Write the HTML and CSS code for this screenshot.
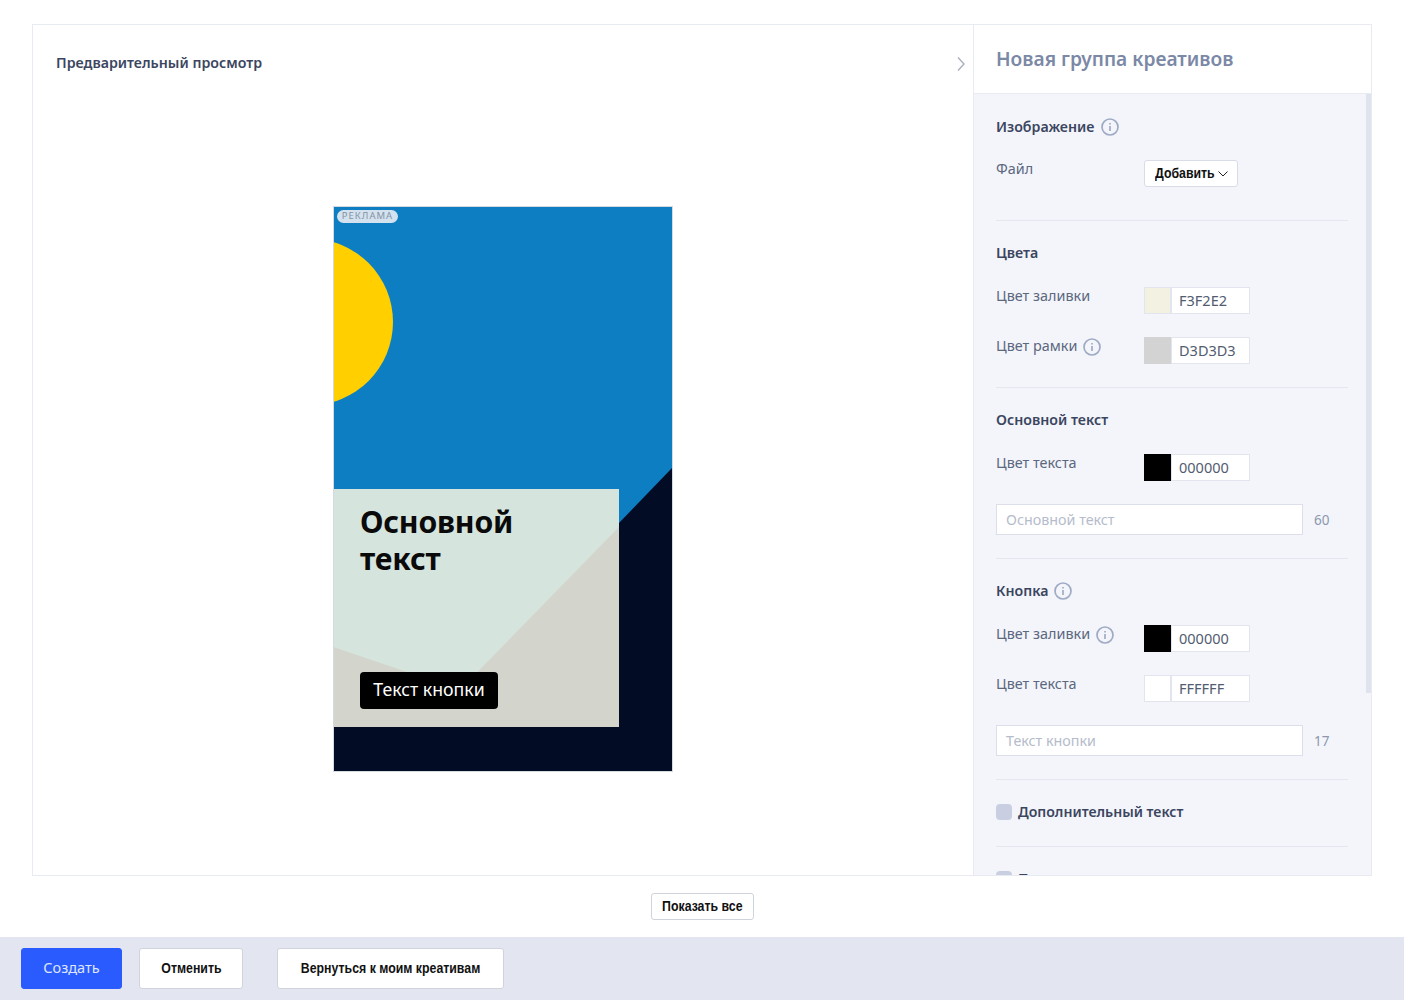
FILE: index.html
```html
<!DOCTYPE html>
<html lang="ru">
<head>
<meta charset="utf-8">
<title>Новая группа креативов</title>
<link rel="stylesheet" href="styles.css">
</head>
<body>
<div class="page">
  <div class="frame">
    <section class="preview">
      <div class="preview-head">
        <h2 class="preview-title">Предварительный просмотр</h2>
        <svg class="chevron-right" viewBox="0 0 10 16" width="10" height="16"><path d="M2 1.500 8 8l-6 6.500" fill="none" stroke="#a9afbd" stroke-width="1.400"/></svg>
      </div>
      <div class="preview-stage">
        <div class="ad">
          <svg class="ad-art" viewBox="0 0 338 564" width="338" height="564">
            <rect width="338" height="564" fill="#0e7ec2"/>
            <circle cx="-24.300" cy="115" r="83.300" fill="#ffcf00"/>
            <polygon points="338,261 338,564 0,564 0,520 285,520 285,316" fill="#020d25"/>
            <rect x="-1" y="282" width="286" height="238" fill="#d3d4cb"/>
            <polygon points="-1,282 285,282 285,320 126,483 -1,440" fill="#d5e4dd"/>
          </svg>
          <span class="ad-badge">РЕКЛАМА</span>
          <div class="ad-headline">Основной<br>текст</div>
          <span class="ad-button">Текст кнопки</span>
        </div>
      </div>
    </section>
    <aside class="panel">
      <header class="panel-head"><h1 class="panel-title">Новая группа креативов</h1></header>
      <div class="panel-body">
        <div class="scroll-thumb"></div>
        <div class="section section-first">
          <div class="section-title">Изображение
            <svg class="info" viewBox="0 0 18 18"><circle cx="9" cy="9" r="8" /><path d="M9 8v5M9 5v1.500"/></svg>
          </div>
          <div class="row row-file">
            <span class="label">Файл</span>
            <button class="btn-add"><span class="narrow narrow-add">Добавить</span>
              <svg viewBox="0 0 10 6" width="10" height="6"><path d="M.5.5 5 5 9.500.5" fill="none" stroke="#222" stroke-width="1"/></svg>
            </button>
          </div>
        </div>
        <div class="section">
          <div class="section-title">Цвета</div>
          <div class="row">
            <span class="label">Цвет заливки</span>
            <span class="color"><span class="swatch swatch-cream"></span><span class="hex">F3F2E2</span></span>
          </div>
          <div class="row">
            <span class="label">Цвет рамки
              <svg class="info" viewBox="0 0 18 18"><circle cx="9" cy="9" r="8" /><path d="M9 8v5M9 5v1.500"/></svg>
            </span>
            <span class="color"><span class="swatch swatch-gray"></span><span class="hex">D3D3D3</span></span>
          </div>
        </div>
        <div class="section">
          <div class="section-title">Основной текст</div>
          <div class="row">
            <span class="label">Цвет текста</span>
            <span class="color"><span class="swatch swatch-black"></span><span class="hex">000000</span></span>
          </div>
          <div class="row row-input">
            <span class="field">Основной текст</span><span class="count">60</span>
          </div>
        </div>
        <div class="section">
          <div class="section-title">Кнопка
            <svg class="info" viewBox="0 0 18 18"><circle cx="9" cy="9" r="8" /><path d="M9 8v5M9 5v1.500"/></svg>
          </div>
          <div class="row">
            <span class="label">Цвет заливки
              <svg class="info" viewBox="0 0 18 18"><circle cx="9" cy="9" r="8" /><path d="M9 8v5M9 5v1.500"/></svg>
            </span>
            <span class="color"><span class="swatch swatch-black"></span><span class="hex">000000</span></span>
          </div>
          <div class="row">
            <span class="label">Цвет текста</span>
            <span class="color"><span class="swatch swatch-white"></span><span class="hex">FFFFFF</span></span>
          </div>
          <div class="row row-input">
            <span class="field">Текст кнопки</span><span class="count">17</span>
          </div>
        </div>
        <div class="section section-check">
          <div class="section-title"><span class="check"></span>Дополнительный текст</div>
        </div>
        <div class="section section-check">
          <div class="section-title"><span class="check"></span>Предупреждение</div>
        </div>
      </div>
    </aside>
  </div>
  <div class="show-all"><button class="btn btn-small"><span class="narrow">Показать все</span></button></div>
  <footer class="footer">
    <button class="btn btn-primary">Создать</button>
    <button class="btn btn-cancel"><span class="narrow">Отменить</span></button>
    <button class="btn btn-back"><span class="narrow">Вернуться к моим креативам</span></button>
  </footer>
</div>
</body>
</html>
```
FILE: styles.css
```css
* { box-sizing: border-box; }
html, body { margin: 0; padding: 0; background: #fff; }
body { font-family: "Noto Sans", "Liberation Sans", sans-serif; color: #3b4560; }
.page { height: 1000px; padding-top: 24px; display: flex; flex-direction: column; overflow: hidden; }

.frame { height: 852px; margin: 0 32px; border: 1px solid #e9ebf3; display: flex; }

.preview { flex: 1; min-width: 0; display: flex; flex-direction: column; }
.preview-head { height: 181px; padding: 28px 7px 0 23px; display: flex; justify-content: space-between; align-items: flex-start; }
.preview-title { margin: 0; font-size: 14.200px; line-height: 20px; font-weight: 600; color: #3b4560; }
.chevron-right { margin-top: 3px; }
.preview-stage { display: flex; justify-content: center; }

.ad { position: relative; width: 340px; height: 566px; border: 1px solid #d5d9e0; flex: none; }
.ad-art { display: block; }
.ad-badge { position: absolute; left: 3px; top: 3px; height: 13px; width: 61px; border-radius: 7px; background: #d3e2ee; color: #8493a6; font-size: 9.500px; line-height: 12px; letter-spacing: 1px; text-align: center; }
.ad-headline { position: absolute; left: 26px; top: 296px; font-size: 30.200px; line-height: 37px; font-weight: 700; letter-spacing: -0.200px; color: #0a0a0a; }
.ad-button { position: absolute; left: 26px; top: 465px; width: 138px; height: 37px; border-radius: 4px; background: #000; color: #fff; font-size: 17.700px; line-height: 35px; text-align: center; }

.panel { width: 398px; flex: none; border-left: 1px solid #e9ebf3; display: flex; flex-direction: column; min-height: 0; }
.panel-head { height: 69px; padding: 0 22px; display: flex; align-items: center; border-bottom: 1px solid #e9ebf3; flex: none; }
.panel-title { margin: 0; font-size: 19.200px; font-weight: 600; color: #7b88a6; line-height: 28px; }
.panel-body { position: relative; flex: 1; min-height: 0; overflow: hidden; background: #f3f5fa; padding: 1px 23px 0 22px; }
.scroll-thumb { position: absolute; top: 0; right: 0; width: 5px; height: 599px; background: #dfe3ee; }

.section { padding: 22px 0 23px; border-bottom: 1px solid #e4e7f0; }
.section:nth-child(n+4) { padding-bottom: 22px; }
.section-first { padding-bottom: 0; }
.section.section-check { padding-bottom: 24px; }
.section-title { display: flex; align-items: center; height: 20px; margin-bottom: 24px; font-size: 14.200px; line-height: 18px; font-weight: 600; color: #3b4560; gap: 6px; }
.section-first .section-title { margin-bottom: 23px; gap: 7px; }
.section-check .section-title { margin-bottom: 0; gap: 6px; font-size: 14.100px; }
.info { width: 18px; height: 18px; flex: none; fill: none; stroke: #9fabc4; stroke-width: 1.700; }
.section-title .info { margin-top: 0; }

.row { display: flex; align-items: flex-start; margin-bottom: 23px; }
.row:last-child { margin-bottom: 0; }
.row-file { padding-bottom: 33px; }
.label { width: 148px; flex: none; display: flex; align-items: flex-start; gap: 6px; font-size: 14.400px; line-height: 18px; color: #5c6780; }
.label .info { margin-top: 1px; }
.color { display: flex; height: 27px; }
.swatch { width: 27px; height: 27px; border: 1px solid #e2e5ee; }
.swatch-cream { background: #f3f2e2; }
.swatch-gray { background: #d3d3d3; border-color: #d3d3d3; }
.swatch-black { background: #000; border-color: #000; }
.swatch-white { background: #fff; }
.hex { width: 79px; height: 27px; padding-left: 7px; background: #fff; border: 1px solid #e2e5ee; font-size: 14.500px; line-height: 25px; color: #525c70; }
.field { width: 307px; height: 31px; background: #fff; border: 1px solid #dcdfe9; padding-left: 9px; font-size: 14.300px; line-height: 29px; color: #b5bccb; }
.count { margin-left: 11px; font-size: 13.500px; line-height: 32px; color: #8d97ad; }

.narrow { display: inline-block; font-size: 14.500px; transform: scaleX(.85); white-space: nowrap; }
.narrow-add { transform-origin: left center; margin-right: -7px; margin-top: -1px; }
.btn-add { display: flex; align-items: center; gap: 0; width: 94px; height: 27px; padding: 0 0 0 10px; background: #fff; border: 1px solid #d9dce6; border-radius: 3px; font-family: "Liberation Sans", sans-serif; font-weight: 700; color: #111; }

.check { width: 16px; height: 16px; border-radius: 4px; background: #c9cfe0; flex: none; }

.show-all { height: 61px; padding-top: 17px; display: flex; justify-content: center; }
.btn { font-family: "Liberation Sans", sans-serif; font-weight: 700; color: #111; background: #fff; border: 1px solid #cfd3dc; border-radius: 3px; padding: 0 0 2px; }
.btn-small { width: 103px; height: 27px; }

.footer { flex: 1; background: #e3e6f0; padding: 11px 0 0 21px; display: flex; align-items: flex-start; }
.footer .btn { height: 41px; }
.btn-primary { width: 101px; background: #2a5bff; border-color: #2a5bff; color: #dfe7ff; font-family: "Noto Sans", sans-serif; font-weight: 400; font-size: 14.500px; padding-bottom: 3px; }
.btn-cancel { width: 104px; margin-left: 17px; }
.btn-back { width: 227px; margin-left: 34px; }
```
